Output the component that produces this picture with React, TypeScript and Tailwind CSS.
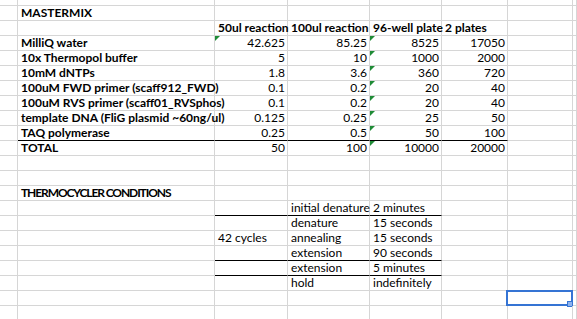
import React from 'react';

type Cell = {
  text?: string;
  bold?: boolean;
  right?: boolean;
  tight?: boolean;
  black?: boolean; // black bottom border
  flag?: boolean; // green error triangle
  selected?: boolean;
};

// largeurs des colonnes (bordure droite comprise)
const widths = ['w-[18px]', 'w-[197px]', 'w-[73px]', 'w-[82px]', 'w-[72px]', 'w-[66px]', 'w-[65px]', 'flex-1'];

const mix: [string, string, string, string, string][] = [
  ['MilliQ water', '42.625', '85.25', '8525', '17050'],
  ['10x Thermopol buffer', '5', '10', '1000', '2000'],
  ['10mM dNTPs', '1.8', '3.6', '360', '720'],
  ['100uM FWD primer (scaff912_FWD)', '0.1', '0.2', '20', '40'],
  ['100uM RVS primer (scaff01_RVSphos)', '0.1', '0.2', '20', '40'],
  ['template DNA (FliG plasmid ~60ng/ul)', '0.125', '0.25', '25', '50'],
  ['TAQ polymerase', '0.25', '0.5', '50', '100'],
  ['TOTAL', '50', '100', '10000', '20000'],
];

const thermo: [string, string, string, boolean][] = [
  ['', 'initial denature', '2 minutes', true],
  ['', 'denature', '15 seconds', false],
  ['42 cycles', 'annealing', '15 seconds', false],
  ['', 'extension', '90 seconds', true],
  ['', 'extension', '5 minutes', true],
  ['', 'hold', 'indefinitely', false],
];

function buildRows(): Cell[][] {
  const rows: Cell[][] = [];
  const empty = () => Array.from({ length: 8 }, () => ({} as Cell));

  rows.push(empty()); // MASTERMIX
  rows[0][1] = { text: 'MASTERMIX', bold: true };

  const head = empty();
  ['50ul reaction', '100ul reaction', '96-well plate', '2 plates'].forEach((t, i) => {
    head[i + 2] = { text: t, bold: true };
  });
  rows.push(head);

  mix.forEach((m, r) => {
    const row = empty();
    row[1] = { text: m[0], bold: true };
    for (let c = 1; c < 5; c++) row[c + 1] = { text: m[c], right: true };
    row[4].flag = true;
    if (r === 0) row[2].flag = true;
    if (r === 6) for (let c = 1; c < 6; c++) row[c].black = true;
    rows.push(row);
  });

  rows.push(empty());
  rows.push(empty());
  const title = empty();
  title[1] = { text: 'THERMOCYCLER CONDITIONS', bold: true, tight: true };
  rows.push(title);

  thermo.forEach((t) => {
    const row = empty();
    row[2] = { text: t[0], black: t[3] };
    row[3] = { text: t[1], black: t[3] };
    row[4] = { text: t[2], black: t[3] };
    rows.push(row);
  });

  const sel = empty();
  sel[6] = { selected: true };
  rows.push(sel);
  rows.push(empty());
  return rows;
}

function SheetCell({ cell, col }: { cell: Cell; col: number }) {
  return (
    <div
      className={`${widths[col]} relative shrink-0 h-full border-r border-b border-r-[#d6d6d6] ${
        cell.black ? 'border-b-black' : 'border-b-[#d6d6d6]'
      } ${cell.right ? 'text-right pr-[2px]' : 'text-left pl-[3px]'} ${
        cell.bold ? 'font-bold' : 'font-normal'
      } ${cell.tight ? 'tracking-[-1.1px]' : ''} whitespace-nowrap`}
    >
      {cell.text}
      {cell.flag && (
        <svg className="absolute left-0 top-0" width="6" height="6" viewBox="0 0 6 6">
          <polygon points="0,0 5,0 0,5" fill="#1f8b36" />
        </svg>
      )}
      {cell.selected && (
        <div className="absolute left-[-2px] top-[-1px] w-[67px] h-[16px] border-2 border-[#3574d4]">
          <div className="absolute left-[59px] top-[9px] w-[6px] h-[6px] bg-[#8db3ee] border border-[#3574d4]" />
        </div>
      )}
    </div>
  );
}

export default function App() {
  const rows = buildRows();
  return (
    <div className="w-[577px] h-[319px] overflow-hidden bg-white text-black font-['Lato',sans-serif] text-[12px] leading-[14px]">
      <div className="flex h-[6px]">
        {widths.map((w, i) => (
          <div key={i} className={`${w} shrink-0 h-full border-r border-b border-[#d6d6d6]`} />
        ))}
      </div>
      {rows.map((row, r) => (
        <div key={r} className="flex h-[15px]">
          {row.map((cell, c) => (
            <SheetCell key={c} cell={cell} col={c} />
          ))}
        </div>
      ))}
    </div>
  );
}
